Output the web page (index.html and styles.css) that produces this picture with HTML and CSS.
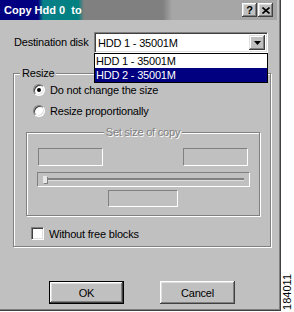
FILE: index.html
```html
<html>
  <head>
    <title>Copy Hdd 0 to</title>
    <link rel="stylesheet" href="styles.css">
  </head>
  <body>
    <div class="screen">
      <div class="dialog">
        <div class="titlebar">
          <span class="title">Copy Hdd 0&nbsp; to</span>
          <div class="caption-buttons">
            <span class="cap-btn help">?</span>
            <span class="cap-btn close"><svg width="8" height="7" viewBox="0 0 8 7"><path d="M0.5 0.5 L7.5 6.5 M7.5 0.5 L0.5 6.5" stroke="#000" stroke-width="1.6" fill="none"/></svg></span>
          </div>
        </div>

        <div class="dest-row">
          <span class="dest-label">Destination disk</span>
          <div class="combo">
            <span class="combo-value">HDD 1 - 35001M</span>
            <span class="combo-arrow"><svg width="7" height="4" viewBox="0 0 7 4"><path d="M0 0 H7 L3.5 4 Z" fill="#000"/></svg></span>
            <ul class="combo-list">
              <li>HDD 1 - 35001M</li>
              <li class="selected">HDD 2 - 35001M</li>
            </ul>
          </div>
        </div>

        <div class="group resize-group">
          <span class="group-title">Resize</span>
          <div class="radio-row"><span class="radio checked"></span>Do not change the size</div>
          <div class="radio-row second"><span class="radio"></span>Resize proportionally</div>

          <div class="group size-group">
            <span class="group-title disabled">Set size of copy</span>
            <div class="edit-row">
              <span class="edit"></span>
              <span class="edit"></span>
            </div>
            <div class="slider">
              <span class="slider-track"></span>
              <span class="slider-thumb"></span>
            </div>
            <span class="edit center"></span>
          </div>

          <div class="check-row"><span class="checkbox"></span>Without free blocks</div>
        </div>

        <div class="button-row">
          <span class="button default">OK</span>
          <span class="button">Cancel</span>
        </div>
      </div>
      <div class="side"><span class="figure-id">184011</span></div>
    </div>
  </body>
</html>
```

FILE: styles.css
```css
body {
  margin: 0px;
  padding: 0px;
  background-color: #FFF;
  font-family: "Liberation Sans", Arial, sans-serif;
  font-size: 11px;
  letter-spacing: -0.2px;
  color: #000;
}
.screen {
  display: flex;
  width: 294px;
  height: 312px;
}
.dialog {
  flex: none;
  width: 281px;
  height: 311px;
  box-sizing: border-box;
  background-color: #C0C0C0;
  box-shadow: inset -1px -1px 0 #404040, inset -2px -2px 0 #808080;
}
.titlebar {
  height: 20px;
  margin-right: 4px;
  padding: 0 4px;
  display: flex;
  align-items: center;
  background: linear-gradient(to right, #000080 0px, #000080 38px, #088088 43px, #008080 78px, #808080 84px, #808080 163px, #A6A6A6 172px, #A6A6A6 100%);
}
.title {
  flex: 1;
  color: #FFF;
  font-weight: bold;
  letter-spacing: 0;
  white-space: nowrap;
}
.caption-buttons {
  display: flex;
  gap: 1px;
}
.cap-btn {
  width: 15px;
  height: 14px;
  display: flex;
  align-items: center;
  justify-content: center;
  background-color: #C0C0C0;
  box-shadow: inset -1px -1px 0 #404040, inset 1px 1px 0 #FFF, inset -2px -2px 0 #808080, inset 2px 2px 0 #DFDFDF;
  font-weight: bold;
  font-size: 11px;
  line-height: 14px;
}

/* destination row */
.dest-row {
  margin-top: 12px;
  padding-left: 14px;
  display: flex;
  align-items: center;
}
.dest-label {
  width: 80px;
  margin-top: -2px;
}
.combo {
  position: relative;
  width: 174px;
  height: 21px;
  box-sizing: border-box;
  display: flex;
  align-items: center;
  background-color: #FFF;
  border: 1px solid;
  border-color: #808080 #FFF #FFF #808080;
  box-shadow: inset 1px 1px 0 #404040, inset -1px -1px 0 #DFDFDF;
  padding: 2px 2px 2px 3px;
}
.combo-value {
  flex: 1;
  padding-top: 1px;
}
.combo-arrow {
  width: 16px;
  height: 15px;
  display: flex;
  align-items: center;
  justify-content: center;
  background-color: #C0C0C0;
  box-shadow: inset -1px -1px 0 #404040, inset 1px 1px 0 #DFDFDF, inset -2px -2px 0 #808080, inset 2px 2px 0 #FFF;
}
.combo-list {
  position: absolute;
  top: 20px;
  left: -1px;
  right: -1px;
  z-index: 2;
  margin: 0;
  padding: 0;
  list-style: none;
  border: 1px solid #000;
  background-color: #FFF;
}
.combo-list li {
  height: 14px;
  line-height: 14px;
  padding-left: 1px;
}
.combo-list .selected {
  background-color: #000080;
  color: #FFF;
}

/* group boxes */
.group {
  position: relative;
  border: 1px solid #808080;
  box-shadow: inset 1px 1px 0 #FFF, 1px 1px 0 #FFF;
}
.group-title {
  position: absolute;
  top: -7px;
  left: 6px;
  padding: 0 2px;
  line-height: 13px;
  background-color: #C0C0C0;
}
.group-title.disabled {
  left: 50%;
  transform: translateX(-50%);
  color: #808080;
  text-shadow: 1px 1px 0 #FFF;
  white-space: nowrap;
}
.resize-group {
  margin: 20px 10px 0 13px;
  padding: 9px 10px 6px 12px;
}
.radio-row,
.check-row {
  height: 13px;
  display: flex;
  align-items: center;
  gap: 5px;
  padding-left: 7px;
}
.radio-row.second {
  margin-top: 8px;
}
.radio {
  position: relative;
  width: 12px;
  height: 12px;
  box-sizing: border-box;
  border-radius: 50%;
  border: 1px solid;
  border-color: #808080 #FFF #FFF #808080;
  background-color: #FFF;
  box-shadow: inset 1px 1px 0 #404040, inset -1px -1px 0 #DFDFDF;
}
.radio.checked::after {
  content: "";
  position: absolute;
  top: 3px;
  left: 3px;
  width: 4px;
  height: 4px;
  border-radius: 50%;
  background-color: #000;
}
.size-group {
  margin-top: 15px;
  height: 84px;
  box-sizing: border-box;
  padding: 15px 11px 0 11px;
  display: flex;
  flex-direction: column;
}
.edit-row {
  display: flex;
  justify-content: space-between;
}
.edit {
  width: 65px;
  height: 18px;
  box-sizing: border-box;
  border: 1px solid;
  border-color: #808080 #FFF #FFF #808080;
}
.edit.center {
  align-self: center;
  width: 70px;
  height: 17px;
  margin-top: 3px;
}
.slider {
  position: relative;
  margin: 6px -2px 0 -1px;
  height: 15px;
  box-sizing: border-box;
  border: 1px solid;
  border-color: #808080 #FFF #FFF #808080;
  padding: 5px 5px 0 5px;
}
.slider-track {
  display: block;
  height: 3px;
  box-sizing: border-box;
  border-top: 2px solid #808080;
  border-bottom: 1px solid #DFDFDF;
}
.slider-thumb {
  position: absolute;
  top: 3px;
  left: 5px;
  width: 4px;
  height: 7px;
  background-color: #E8E8E8;
  box-shadow: 1px 1px 0 #808080;
}
.check-row {
  margin-top: 11px;
  padding-left: 5px;
}
.checkbox {
  width: 13px;
  height: 13px;
  box-sizing: border-box;
  border: 1px solid;
  border-color: #808080 #FFF #FFF #808080;
  background-color: #FFF;
  box-shadow: inset 1px 1px 0 #404040, inset -1px -1px 0 #DFDFDF;
}

/* buttons */
.button-row {
  margin-top: 34px;
  padding-left: 49px;
  display: flex;
  gap: 36px;
}
.button {
  width: 75px;
  height: 23px;
  box-sizing: border-box;
  display: flex;
  align-items: center;
  justify-content: center;
  background-color: #C0C0C0;
  box-shadow: inset -1px -1px 0 #404040, inset 1px 1px 0 #FFF, inset -2px -2px 0 #808080, inset 2px 2px 0 #DFDFDF;
}
.button.default {
  border: 1px solid #000;
}

.side {
  flex: 1;
  display: flex;
  align-items: flex-end;
  justify-content: center;
  padding-bottom: 2px;
}
.figure-id {
  writing-mode: vertical-rl;
  transform: rotate(180deg);
  line-height: 11px;
  font-size: 11px;
  letter-spacing: 0;
}
```
